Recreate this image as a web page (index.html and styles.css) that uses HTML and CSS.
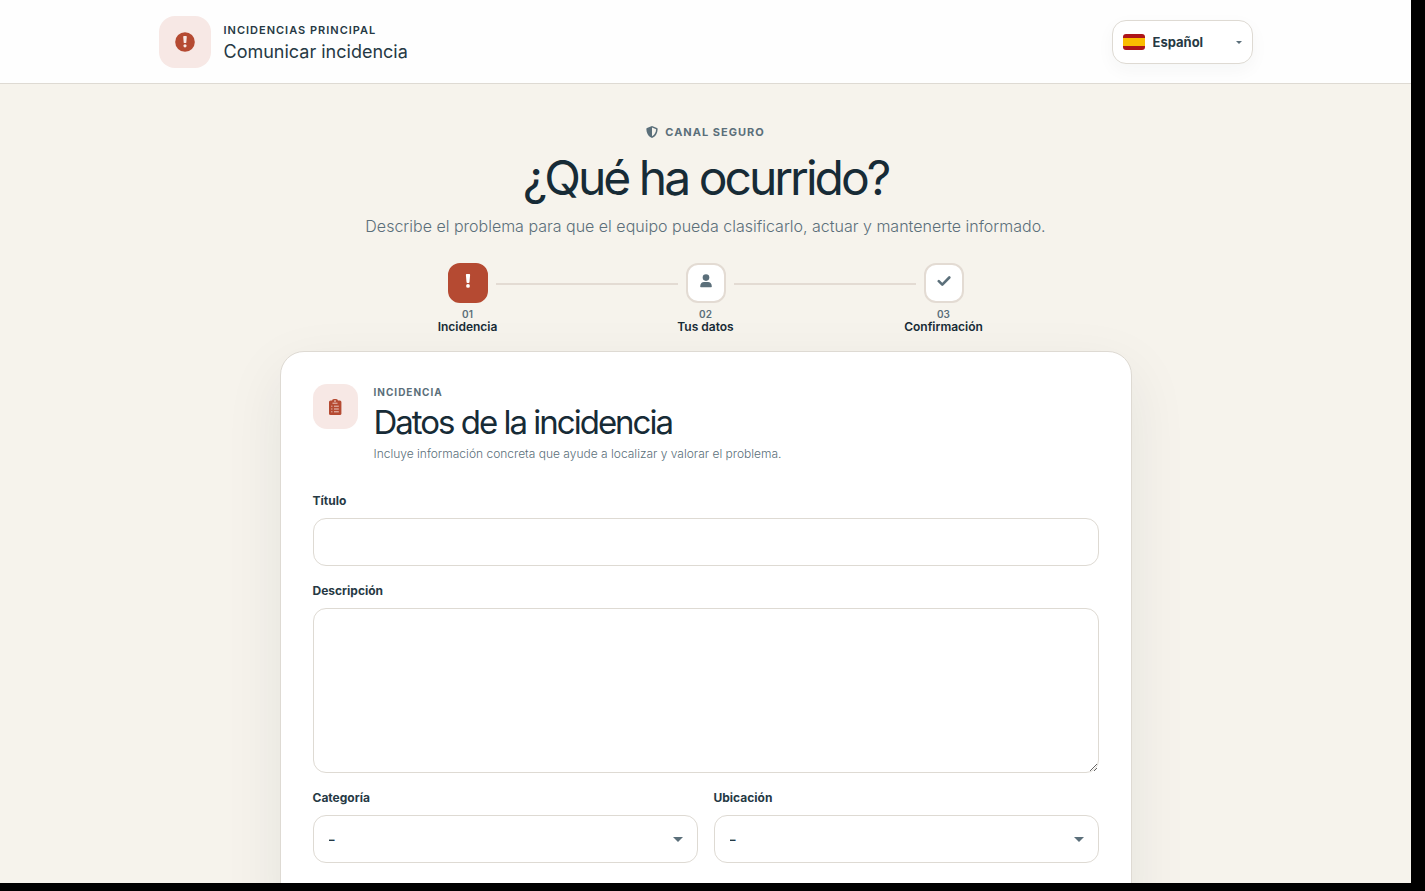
FILE: index.html
```html
<!DOCTYPE html>
<html lang="es">

<head>
  <meta charset="UTF-8">
  <meta name="viewport" content="width=device-width, initial-scale=1.0">
  <title>Comunicar incidencia</title>
  <link rel="stylesheet" href="styles.css">
</head>

<body>
  <div class="page">
    <header class="topbar">
      <div class="topbar-inner">
        <div class="brand">
          <span class="brand-icon">
            <svg width="20" height="20" viewBox="0 0 20 20" aria-hidden="true">
              <circle cx="10" cy="10" r="9.8" fill="#b54a32"/>
              <path d="M8.2 4.800c0-.4.3-.7.7-.7h2.200c.4 0 .7.300.7.700l-.5 5.600c0 .4-.3.6-.6.6H9.300c-.3 0-.6-.2-.6-.6z" fill="#f7e8e5"/>
              <circle cx="10" cy="13.800" r="1.600" fill="#f7e8e5"/>
            </svg>
          </span>
          <div class="brand-text">
            <div class="brand-name">Incidencias Principal</div>
            <div class="brand-title">Comunicar incidencia</div>
          </div>
        </div>
        <div class="language">
          <svg class="flag" width="22" height="16" viewBox="0 0 22 16" aria-hidden="true">
            <rect width="22" height="16" fill="#ad1519"/>
            <rect y="4" width="22" height="8" fill="#fabd00"/>
          </svg>
          <select class="language-select" aria-label="Idioma">
            <option selected>Español</option>
            <option>English</option>
          </select>
        </div>
      </div>
    </header>

    <main>
      <section class="intro">
        <div class="eyebrow">
          <svg width="12" height="12" viewBox="0 0 12 12" aria-hidden="true">
            <path d="M6 0l5 2c.4.2.6.5.6.9C11.600 6.500 10 10.300 6 12 2 10.300.4 6.500.4 2.900c0-.4.2-.7.6-.9z" fill="#5b6f7a"/>
            <path d="M6 1.600v8.700c2.700-1.400 4-4 4.100-7z" fill="#f6f3ec"/>
          </svg>
          Canal seguro
        </div>
        <h1>¿Qué ha ocurrido?</h1>
        <p class="lead">Describe el problema para que el equipo pueda clasificarlo, actuar y mantenerte informado.</p>
      </section>

      <div class="steps">
        <div class="step active">
          <span class="step-icon">
            <svg width="14" height="14" viewBox="0 0 14 14" aria-hidden="true">
              <path d="M4.900 1c0-.6.4-1 1-1h2.200c.6 0 1 .4 1 1l-.6 7c0 .6-.4.9-.9.9H6.400c-.5 0-.9-.3-.9-.9z" fill="#fff"/>
              <circle cx="7" cy="11.900" r="1.900" fill="#fff"/>
            </svg>
          </span>
          <span class="step-number">01</span>
          <span class="step-label">Incidencia</span>
        </div>
        <span class="step-line"></span>
        <div class="step">
          <span class="step-icon">
            <svg width="14" height="14" viewBox="0 0 14 14" aria-hidden="true">
              <circle cx="7" cy="3.600" r="3.300" fill="#5b6f7a"/>
              <path d="M1.200 12.200C1.200 9.600 3 8 5 8h4c2 0 3.800 1.600 3.800 4.200 0 .6-.4 1-1 1H2.200c-.6 0-1-.4-1-1z" fill="#5b6f7a"/>
            </svg>
          </span>
          <span class="step-number">02</span>
          <span class="step-label">Tus datos</span>
        </div>
        <span class="step-line"></span>
        <div class="step">
          <span class="step-icon">
            <svg width="14" height="14" viewBox="0 0 14 14" aria-hidden="true">
              <path d="M1.800 7.200l3.500 3.500 7-7.200" fill="none" stroke="#5b6f7a" stroke-width="2.600" stroke-linecap="round" stroke-linejoin="round"/>
            </svg>
          </span>
          <span class="step-number">03</span>
          <span class="step-label">Confirmación</span>
        </div>
      </div>

      <form class="card">
        <div class="card-header">
          <span class="card-icon">
            <svg width="14" height="16" viewBox="0 0 14 16" aria-hidden="true">
              <rect x="4" y="0" width="6" height="4" rx="2" fill="#b54a32"/>
              <rect x="1" y="1.600" width="12.400" height="14.400" rx="1.500" fill="#b54a32"/>
              <circle cx="7" cy="2" r=".8" fill="#f7e8e5"/>
              <path d="M4.500 4.200h5M6 7.200h4.800M6 10h4.800M6 12.800h4.800M3.200 7.200h1.200M3.200 10h1.200M3.200 12.800h1.200" stroke="#f7e8e5" stroke-width=".8"/>
            </svg>
          </span>
          <div>
            <div class="card-eyebrow">Incidencia</div>
            <h2>Datos de la incidencia</h2>
            <p class="card-text">Incluye información concreta que ayude a localizar y valorar el problema.</p>
          </div>
        </div>

        <div class="field">
          <label for="titulo">Título</label>
          <input class="control" type="text" id="titulo">
        </div>
        <div class="field">
          <label for="descripcion">Descripción</label>
          <textarea class="control" id="descripcion"></textarea>
        </div>
        <div class="row">
          <div class="field">
            <label for="categoria">Categoría</label>
            <select class="control" id="categoria">
              <option>–</option>
            </select>
          </div>
          <div class="field">
            <label for="ubicacion">Ubicación</label>
            <select class="control" id="ubicacion">
              <option>–</option>
            </select>
          </div>
        </div>
      </form>
    </main>
  </div>
</body>

</html>
```
FILE: styles.css
```css
* {
  box-sizing: border-box;
}

body {
  margin: 0;
  height: 100vh;
  padding: 0 14px 8px 0;
  overflow: hidden;
  background: #000;
  color: #172b36;
  font-family: Inter, "Liberation Sans", sans-serif;
}

h1,
h2,
p {
  margin: 0;
}

.page {
  height: 100%;
  overflow: hidden;
  background: #f6f3ec;
}

.topbar {
  padding: 16px 24px 15px;
  background: #fefefe;
  border-bottom: 1px solid #dedad3;
}

.topbar-inner {
  display: flex;
  align-items: center;
  justify-content: space-between;
  max-width: 1094px;
  margin: 0 auto;
}

.brand {
  display: flex;
  align-items: center;
  gap: 13px;
  color: #263944;
}

.brand-icon,
.card-icon {
  display: flex;
  flex-shrink: 0;
  align-items: center;
  justify-content: center;
  background: #f7e8e5;
}

.brand-icon {
  width: 52px;
  height: 52px;
  border-radius: 16px;
}

.brand-text {
  padding-top: 4px;
}

.brand-name {
  font-size: 11px;
  line-height: 16px;
  font-weight: 600;
  letter-spacing: 1px;
  text-transform: uppercase;
}

.brand-title {
  font-size: 18px;
  line-height: 28px;
}

.language {
  display: flex;
  align-items: center;
  gap: 8px;
  width: 141px;
  height: 44px;
  padding: 0 10px;
  background: #fff;
  border: 1px solid #dedad3;
  border-radius: 14px;
  box-shadow: 0 6px 18px rgba(23, 43, 54, 0.04);
}

.flag {
  flex-shrink: 0;
  border-radius: 3px;
}

.language-select {
  flex: 1;
  min-width: 0;
  padding: 0;
  border: 0;
  appearance: none;
  background: url("data:image/svg+xml,%3Csvg xmlns='http://www.w3.org/2000/svg' width='6' height='3'%3E%3Cpath d='M0 0h6L3 3z' fill='%235b6f7a'/%3E%3C/svg%3E") no-repeat right center;
  color: #263944;
  font-family: inherit;
  font-size: 13px;
  line-height: 20px;
  font-weight: 700;
}

.intro {
  padding: 40px 16px 0;
  text-align: center;
}

.eyebrow {
  display: flex;
  align-items: center;
  justify-content: center;
  gap: 7px;
  color: #5b6f7a;
  font-size: 11px;
  line-height: 16px;
  font-weight: 700;
  letter-spacing: 1px;
  text-transform: uppercase;
}

h1 {
  margin-top: 8px;
  font-size: 48px;
  line-height: 60px;
  font-weight: 400;
  letter-spacing: -3px;
}

.lead {
  margin-top: 6px;
  color: #5b6f7a;
  font-size: 16px;
  line-height: 24px;
  font-weight: 300;
}

.steps {
  display: flex;
  gap: 8px;
  max-width: 516px;
  margin: 25px auto 17px;
}

.step {
  display: flex;
  flex-direction: column;
  align-items: center;
  width: 40px;
  white-space: nowrap;
}

.step-icon {
  display: flex;
  justify-content: center;
  width: 40px;
  height: 40px;
  padding-top: 9px;
  background: #fff;
  border: 2px solid #e3dbd3;
  border-radius: 12px;
}

.active .step-icon {
  background: #b54a32;
  border-color: #b54a32;
}

.step-number {
  margin-top: 5px;
  color: #5b6f7a;
  font-size: 10px;
  line-height: 12px;
  font-weight: 600;
}

.step-label {
  font-size: 12px;
  line-height: 14px;
  font-weight: 600;
}

.step-line {
  flex: 1;
  height: 2px;
  margin-top: 20px;
  background: #e3dbd3;
}

.card {
  max-width: 852px;
  margin: 0 auto;
  padding: 32px 32px 48px;
  background: #fff;
  border: 1px solid #dedad3;
  border-radius: 24px;
  box-shadow: 0 20px 60px rgba(23, 43, 54, 0.08);
}

.card-header {
  display: flex;
  gap: 16px;
  margin-bottom: 28px;
}

.card-icon {
  width: 45px;
  height: 45px;
  border-radius: 14px;
}

.card-eyebrow {
  color: #5b6f7a;
  font-size: 10px;
  line-height: 16px;
  font-weight: 700;
  letter-spacing: 1px;
  text-transform: uppercase;
}

h2 {
  font-size: 33px;
  line-height: 44px;
  font-weight: 400;
  letter-spacing: -2px;
}

.card-text {
  color: #5b6f7a;
  font-size: 12px;
  line-height: 20px;
  font-weight: 300;
}

.field {
  display: flex;
  flex-direction: column;
  gap: 8px;
  margin-bottom: 16px;
}

label {
  color: #263944;
  font-size: 12px;
  line-height: 18px;
  font-weight: 700;
}

.control {
  width: 100%;
  height: 48px;
  padding: 0 15px;
  background: #fff;
  border: 1px solid #dedad3;
  border-radius: 13px;
  color: #263944;
  font-family: inherit;
  font-size: 12px;
  font-weight: 700;
}

textarea.control {
  height: 165px;
  padding: 12px 15px;
  resize: vertical;
}

select.control {
  appearance: none;
  background: #fff url("data:image/svg+xml,%3Csvg xmlns='http://www.w3.org/2000/svg' width='10' height='5'%3E%3Cpath d='M0 0h10L5 5z' fill='%235b6f7a'/%3E%3C/svg%3E") no-repeat right 14px center;
}

.row {
  display: grid;
  grid-template-columns: 1fr 1fr;
  gap: 16px;
}
```
